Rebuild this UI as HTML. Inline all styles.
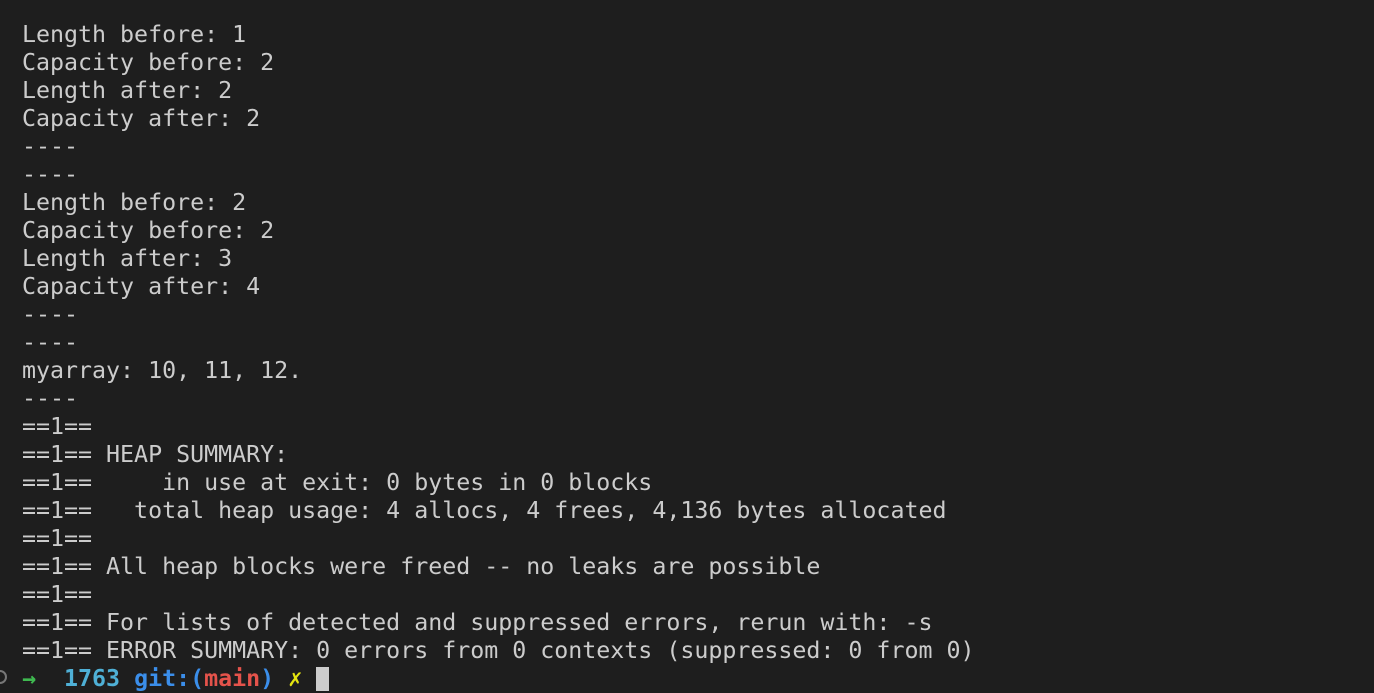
<!DOCTYPE html>
<html><head><style>
html,body{margin:0;padding:0;background:#1e1e1e;width:1374px;height:690px;overflow:hidden}
pre{margin:0;position:absolute;left:22px;top:21px;font-family:"DejaVu Sans Mono","Liberation Mono",monospace;font-size:23.28px;line-height:28px;color:#cccccc;letter-spacing:0}
.g{color:#3fb950;font-weight:bold}.c{color:#4fb0d6;font-weight:bold}.b{color:#3b8eea;font-weight:bold}.r{color:#e5534b;font-weight:bold}.y{color:#e5e510;font-weight:bold}
.cur{display:inline-block;width:13px;height:24px;background:#cccccc;vertical-align:-5px}
.dot{position:absolute;left:-7px;top:670px;width:10px;height:10px;border:2px solid #777;border-radius:50%}
</style></head><body>
<div class="dot"></div>
<pre>Length before: 1
Capacity before: 2
Length after: 2
Capacity after: 2
----
----
Length before: 2
Capacity before: 2
Length after: 3
Capacity after: 4
----
----
myarray: 10, 11, 12.
----
==1==
==1== HEAP SUMMARY:
==1==     in use at exit: 0 bytes in 0 blocks
==1==   total heap usage: 4 allocs, 4 frees, 4,136 bytes allocated
==1==
==1== All heap blocks were freed -- no leaks are possible
==1==
==1== For lists of detected and suppressed errors, rerun with: -s
==1== ERROR SUMMARY: 0 errors from 0 contexts (suppressed: 0 from 0)
<span class="g">→</span>  <span class="c">1763</span> <span class="b">git:(</span><span class="r">main</span><span class="b">)</span> <span class="y">✗</span> <span class="cur"></span></pre>
</body></html>
